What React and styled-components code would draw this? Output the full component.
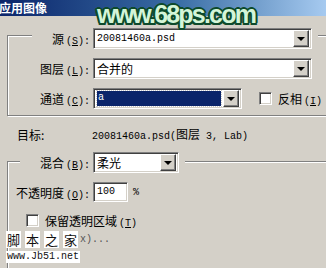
import React from "react";
import styled, { createGlobalStyle } from "styled-components";

const GlobalStyle = createGlobalStyle`
  html, body {
    margin: 0;
    padding: 0;
    background: #d4d0c8;
  }
  body {
    width: 326px;
    height: 268px;
    overflow: hidden;
    font-family: "Noto Sans CJK SC", "Liberation Sans", sans-serif;
    font-size: 12px;
    color: #000;
  }
`;

const S = {
  Dialog: styled.div`
    position: relative;
    width: 326px;
    height: 268px;
    overflow: hidden;
    background: #d4d0c8;
  `,
  TitleBar: styled.div`
    height: 16px;
    background: linear-gradient(90deg, #0a246a 0%, #3a6ea5 55%, #a6caf0 100%);
    color: #fff;
    font-weight: bold;
    font-size: 12px;
    line-height: 16px;
    margin-left: -1px;
  `,
  Watermark: styled.div`
    position: absolute;
    left: 97px;
    top: 0px;
    font-family: "Liberation Sans", sans-serif;
    font-weight: bold;
    font-size: 25px;
    letter-spacing: -1.8px;
    line-height: 28px;
    color: #d4f5d8;
    text-shadow: 2px 0 0 #0d4a2c, -2px 0 0 #0d4a2c, 0 2px 0 #0d4a2c,
      0 -2px 0 #0d4a2c, 1.5px 1.5px 0 #0d4a2c, -1.5px 1.5px 0 #0d4a2c,
      1.5px -1.5px 0 #0d4a2c, -1.5px -1.5px 0 #0d4a2c;
  `,
  Group: styled.div`
    margin-left: 7px;
    margin-top: ${({ $top }) => $top}px;
    width: 330px;
    height: ${({ $height }) => $height}px;
    box-sizing: border-box;
    border: 1px solid #808080;
    box-shadow: 1px 1px 0 #fff, inset 1px 1px 0 #fff;
    padding-bottom: 5px;
  `,
  Legend: styled.div`
    display: flex;
    align-items: center;
    height: 22px;
    width: fit-content;
    margin-top: ${({ $top }) => $top}px;
    margin-left: ${({ $left }) => $left}px;
    padding-right: 6px;
    background: #d4d0c8;
  `,
  Row: styled.div`
    display: flex;
    align-items: center;
    height: 22px;
    margin-top: 8px;
  `,
  Label: styled.div`
    width: ${({ $w }) => $w}px;
    box-sizing: border-box;
    padding-right: 3px;
    text-align: right;
    white-space: nowrap;
    font-size: 12px;
  `,
  Key: styled.span`
    font-family: "Liberation Mono", monospace;
    font-size: 10px;
    margin-left: 2px;
  `,
  Select: styled.div`
    width: ${({ $w }) => $w}px;
    height: 21px;
    box-sizing: border-box;
    display: flex;
    align-items: center;
    background: #fff;
    border-style: solid;
    border-width: 1px;
    border-color: #808080 #fff #fff #808080;
    box-shadow: inset 1px 1px 0 #404040, inset -1px -1px 0 #d4d0c8;
    padding: 0 2px 0 3px;
  `,
  Value: styled.div`
    flex: 1;
    white-space: nowrap;
    font-family: ${({ $mono }) =>
      $mono
        ? `"Liberation Mono", "Noto Sans CJK SC", monospace`
        : `"Noto Sans CJK SC", sans-serif`};
    font-size: ${({ $mono }) => ($mono ? 10 : 12)}px;
    .cjk {
      font-size: 12px;
    }
  `,
  Highlight: styled.div`
    flex: 1;
    height: 15px;
    margin-right: 2px;
    background: #0a246a;
    color: #fff;
    outline: 1px dotted #c8c8c8;
    font-family: "Liberation Mono", monospace;
    font-size: 10px;
    line-height: 14px;
    padding-left: 1px;
  `,
  DropButton: styled.div`
    width: 16px;
    height: 17px;
    box-sizing: border-box;
    flex-shrink: 0;
    display: flex;
    align-items: center;
    justify-content: center;
    background: #d4d0c8;
    border: 1px solid;
    border-color: #fff #404040 #404040 #fff;
    box-shadow: inset -1px -1px 0 #808080;

    &::after {
      content: "";
      border-left: 4px solid transparent;
      border-right: 4px solid transparent;
      border-top: 4px solid #000;
      margin-top: 1px;
    }
  `,
  Check: styled.div`
    width: 13px;
    height: 13px;
    box-sizing: border-box;
    flex-shrink: 0;
    background: #fff;
    border-style: solid;
    border-width: 1px;
    border-color: #808080 #fff #fff #808080;
    box-shadow: inset 1px 1px 0 #404040, inset -1px -1px 0 #d4d0c8;
    margin-left: ${({ $left }) => $left}px;
    margin-right: 6px;
  `,
  TargetRow: styled.div`
    display: flex;
    align-items: center;
    height: 14px;
    margin-top: 11px;
    padding-left: 17px;
    .name {
      width: 75px;
    }
  `,
  Input: styled.div`
    width: 35px;
    height: 20px;
    box-sizing: border-box;
    background: #fff;
    border-style: solid;
    border-width: 1px;
    border-color: #808080 #fff #fff #808080;
    box-shadow: inset 1px 1px 0 #404040, inset -1px -1px 0 #d4d0c8;
    padding-left: 3px;
    font-family: "Liberation Mono", monospace;
    font-size: 10px;
    line-height: 18px;
  `,
  Percent: styled.span`
    margin-left: 5px;
    font-family: "Liberation Mono", monospace;
    font-size: 10px;
  `,
  CheckRow: styled.div`
    display: flex;
    align-items: center;
    height: 14px;
    margin-top: 10px;
  `,
  SiteMark: styled.div`
    position: absolute;
    left: 6px;
    top: 231px;
    display: flex;
    flex-direction: column;
    gap: 3px;
  `,
  SiteChars: styled.div`
    display: flex;
    align-items: center;
    gap: 4px;
    span {
      background: #fff;
      font-size: 13px;
      line-height: 17px;
      padding: 0 1px;
      color: #111;
    }
    .rest {
      background: transparent;
      color: #555;
      font-family: "Liberation Mono", monospace;
      font-size: 10px;
      margin-left: -3px;
    }
  `,
  SiteUrl: styled.div`
    width: fit-content;
    background: #fff;
    font-family: "Liberation Mono", monospace;
    font-size: 10px;
    line-height: 12px;
    padding: 0 1px;
    color: #111;
  `,
};

function Key({ u, colon }) {
  return (
    <S.Key>
      (<u>{u}</u>){colon ? ":" : ""}
    </S.Key>
  );
}

function Dropdown({ width, children }) {
  return (
    <S.Select $w={width}>
      {children}
      <S.DropButton />
    </S.Select>
  );
}

function App() {
  return (
    <S.Dialog>
      <GlobalStyle />
      <S.TitleBar>应用图像</S.TitleBar>
      <S.Watermark>www.68ps.com</S.Watermark>

      <S.Group $top={19} $height={81}>
        <S.Legend $top={-9} $left={24}>
          <S.Label $w={61}>
            源<Key u="S" colon />
          </S.Label>
          <Dropdown width={219}>
            <S.Value $mono>20081460a.psd</S.Value>
          </Dropdown>
        </S.Legend>
        <S.Row>
          <S.Label $w={85}>
            图层<Key u="L" colon />
          </S.Label>
          <Dropdown width={219}>
            <S.Value>合并的</S.Value>
          </Dropdown>
        </S.Row>
        <S.Row>
          <S.Label $w={85}>
            通道<Key u="C" colon />
          </S.Label>
          <Dropdown width={149}>
            <S.Highlight>a</S.Highlight>
          </Dropdown>
          <S.Check $left={17} />
          <span>
            反相<Key u="I" />
          </span>
        </S.Row>
      </S.Group>

      <S.TargetRow>
        <span className="name">目标:</span>
        <S.Value $mono>
          20081460a.psd(<span className="cjk">图层</span> 3, Lab)
        </S.Value>
      </S.TargetRow>

      <S.Group $top={20} $height={140}>
        <S.Legend $top={-11} $left={12}>
          <S.Label $w={73}>
            混合<Key u="B" colon />
          </S.Label>
          <Dropdown width={86}>
            <S.Value>柔光</S.Value>
          </Dropdown>
        </S.Legend>
        <S.Row>
          <S.Label $w={85}>
            不透明度<Key u="O" colon />
          </S.Label>
          <S.Input>100</S.Input>
          <S.Percent>%</S.Percent>
        </S.Row>
        <S.CheckRow>
          <S.Check $left={18} />
          <span>
            保留透明区域<Key u="T" />
          </span>
        </S.CheckRow>
      </S.Group>

      <S.SiteMark>
        <S.SiteChars>
          <span>脚</span>
          <span>本</span>
          <span>之</span>
          <span>家</span>
          <span className="rest">x)...</span>
        </S.SiteChars>
        <S.SiteUrl>www.Jb51.net</S.SiteUrl>
      </S.SiteMark>
    </S.Dialog>
  );
}

export default App;
